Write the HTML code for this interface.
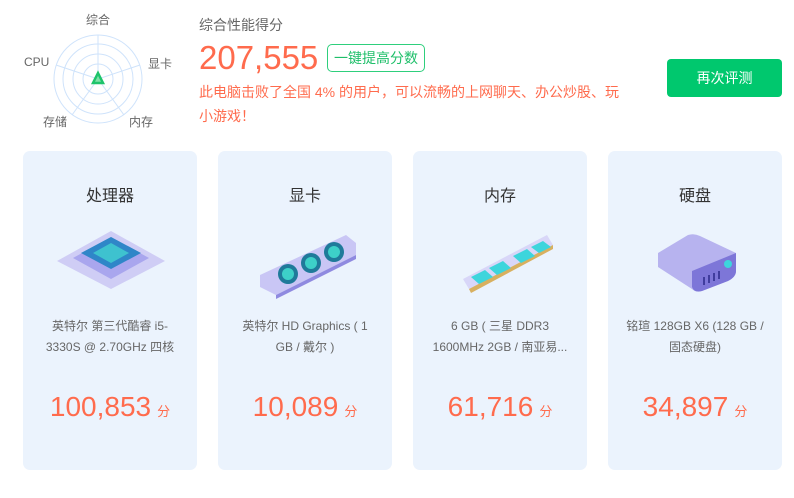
<!DOCTYPE html>
<html><head><meta charset="utf-8"><style>
body{margin:0;width:794px;height:498px;background:#fff;font-family:"Liberation Sans","Noto Sans CJK SC",sans-serif;position:relative;overflow:hidden}
.a{position:absolute}
.lbl{font-size:12px;color:#666}
.card{position:absolute;top:151px;width:174px;height:319px;background:#ebf3fd;border-radius:7px;text-align:center}
.card h3{margin:0;position:absolute;top:31px;width:100%;font-size:16px;font-weight:normal;color:#333}
.card .d{position:absolute;top:165px;left:14px;right:14px;font-size:12px;line-height:21px;color:#666}
.card .s{position:absolute;top:240px;width:100%;font-size:28px;color:#ff6b4d}
.card .s small{font-size:13px;margin-left:6px}
</style></head><body>
<svg class="a" style="left:0;top:0" width="200" height="140">
<g fill="none" stroke="#cfe3fb" stroke-width="1">
<circle cx="98" cy="79" r="44"/><circle cx="98" cy="79" r="35"/><circle cx="98" cy="79" r="25"/><circle cx="98" cy="79" r="15"/>
<line x1="98" y1="79" x2="98" y2="35"/><line x1="98" y1="79" x2="140" y2="65"/><line x1="98" y1="79" x2="124" y2="115"/><line x1="98" y1="79" x2="72" y2="115"/><line x1="98" y1="79" x2="56" y2="65"/>
</g>
<polygon points="98,73 103,83 93,83" fill="#7fe0a8" stroke="#1ec46b" stroke-width="2.5"/>
</svg>
<div class="a lbl" style="left:86px;top:11px">综合</div>
<div class="a lbl" style="left:148px;top:55px">显卡</div>
<div class="a lbl" style="left:129px;top:113px">内存</div>
<div class="a lbl" style="left:43px;top:113px">存储</div>
<div class="a lbl" style="left:24px;top:55px">CPU</div>
<div class="a" style="left:199px;top:15px;font-size:14px;color:#666">综合性能得分</div>
<div class="a" style="left:199px;top:39px;font-size:33px;color:#ff6b4d">207,555</div>
<div class="a" style="left:327px;top:44px;width:96px;height:26px;border:1px solid #2ecf7c;border-radius:5px;color:#1fbf6a;font-size:14px;line-height:26px;text-align:center">一键提高分数</div>
<div class="a" style="left:199px;top:80px;width:425px;font-size:14px;line-height:24px;color:#ff6b4d">此电脑击败了全国 4% 的用户，可以流畅的上网聊天、办公炒股、玩小游戏！</div>
<div class="a" style="left:667px;top:59px;width:115px;height:38px;background:#00c86e;border-radius:4px;color:#fff;font-size:14px;line-height:38px;text-align:center">再次评测</div>

<div class="card" style="left:23px"><h3>处理器</h3>
<svg class="a" style="left:30px;top:72px" width="116" height="70"><polygon points="58,8 112,38 58,66 4,38" fill="#cfcdf5"/><polygon points="58,14 96,35 58,56 20,35" fill="#a9a6ee"/><polygon points="58,14 88,30 58,46 28,30" fill="#2f86c8"/><polygon points="58,20 76,30 58,40 40,30" fill="#3ec2cf"/></svg>
<div class="d">英特尔 第三代酷睿 i5-3330S @ 2.70GHz 四核</div><div class="s">100,853<small>分</small></div></div>
<div class="card" style="left:218px"><h3>显卡</h3>
<svg class="a" style="left:38px;top:78px" width="104" height="70"><polygon points="4,46 90,6 100,14 100,26 20,66 4,58" fill="#c9c6f5"/><polygon points="20,66 100,26 100,30 20,70" fill="#8f8ae0"/><circle cx="32" cy="45" r="10" fill="#1f7a9a"/><circle cx="55" cy="34" r="10" fill="#1f7a9a"/><circle cx="78" cy="23" r="10" fill="#1f7a9a"/><circle cx="32" cy="45" r="6" fill="#3dd0c8"/><circle cx="55" cy="34" r="6" fill="#3dd0c8"/><circle cx="78" cy="23" r="6" fill="#3dd0c8"/></svg>
<div class="d">英特尔 HD Graphics ( 1 GB / 戴尔 )</div><div class="s">10,089<small>分</small></div></div>
<div class="card" style="left:413px"><h3>内存</h3>
<svg class="a" style="left:48px;top:80px" width="96" height="62"><polygon points="2,48 86,4 92,14 8,58" fill="#d8d6f8"/><polygon points="8,58 92,14 92,18 10,62" fill="#d8b060"/><polygon points="10,46 24,39 32,46 18,53" fill="#3dd5dc"/><polygon points="28,37 42,30 50,37 36,44" fill="#3dd5dc"/><polygon points="52,25 66,18 74,25 60,32" fill="#3dd5dc"/><polygon points="70,16 82,10 90,16 78,22" fill="#3dd5dc"/></svg>
<div class="d">6 GB ( 三星 DDR3 1600MHz 2GB / 南亚易...</div><div class="s">61,716<small>分</small></div></div>
<div class="card" style="left:608px"><h3>硬盘</h3>
<svg class="a" style="left:44px;top:80px" width="90" height="62"><path d="M6,22 L36,4 Q42,2 48,5 L84,22 L84,40 Q84,46 76,50 L50,60 Q44,62 40,58 L6,36 Z" fill="#b7b3ef"/><path d="M40,40 L84,22 L84,40 Q84,46 76,50 L50,60 Q42,62 40,56 Z" fill="#7d76d8"/><circle cx="76" cy="33" r="4" fill="#3dd5dc"/><g stroke="#2d2a8a" stroke-width="1.5"><line x1="52" y1="46" x2="52" y2="54"/><line x1="57" y1="44" x2="57" y2="52"/><line x1="62" y1="42" x2="62" y2="50"/><line x1="67" y1="40" x2="67" y2="48"/></g></svg>
<div class="d">铭瑄 128GB X6 (128 GB / 固态硬盘)</div><div class="s">34,897<small>分</small></div></div>
</body></html>
